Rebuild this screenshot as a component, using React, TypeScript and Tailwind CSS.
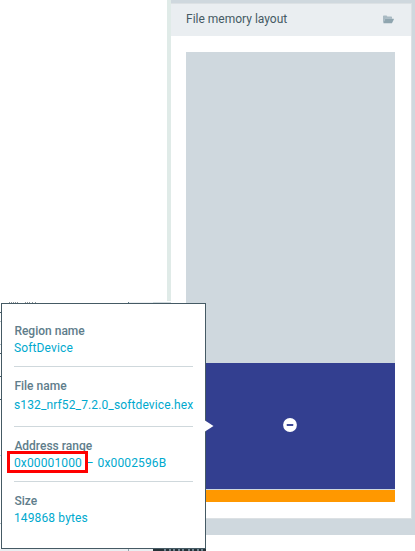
const sections = [
  { label: "Region name", value: "SoftDevice", box: "h-[43px] border-b" },
  { label: "File name", value: "s132_nrf52_7.2.0_softdevice.hex", box: "h-[60px] border-b pt-[12px]", gap: "mt-[2px]" },
  { label: "Address range", value: "0x00001000 – 0x0002596B", box: "h-[55px] border-b pt-[12px]", gap: "[word-spacing:0.7px]" },
  { label: "Size", value: "149868 bytes", box: "h-[50px] pt-[12px]" },
];

const edgeMarks = [
  { top: 312, color: "#455a64" },
  { top: 321, color: "#b0bec5" },
  { top: 344, color: "#b0bec5" },
  { top: 353, color: "#455a64" },
  { top: 376, color: "#455a64" },
  { top: 399, color: "#455a64" },
  { top: 455, color: "#a5dff0" },
  { top: 523, color: "#b0bec5" },
];

const titleMarks = [9, 11, 13, 15, 17, 25, 27, 29, 32, 35];
const logMarks = [11, 16, 20, 25, 29, 35, 39, 44, 48];

function MemoryPanel() {
  return (
    <section className="flex h-[535px] w-[244px] shrink-0 flex-col bg-[#cfd8de] pt-[3px]">
      <div className="flex h-[516px] w-[241px] flex-col border-t border-r border-b border-[#dce1e4] bg-white">
        <header className="flex h-[32px] shrink-0 items-center justify-between bg-[#eaeef1] pr-[17px] pl-[15px]">
          <h1 className="mt-[-2px] text-[12px] leading-[16px] text-[#455a64]">File memory layout</h1>
          <svg className="mt-[-2px] h-[9px] w-[11px]" viewBox="0 0 11 9" fill="none">
            <path d="M0 7.5V1.2Q0 .4.8.4H3.5L4.4 1.5H8.3Q9 1.5 9 2.3V3.7H2.7Q2.2 3.7 2 4.2L.5 7.7Z" fill="#a9bac3" />
            <path d="M2.7 3.7H10.5Q11.1 3.7 10.8 4.4L9.2 7.8Q9 8.3 8.3 8.3H.8Q.2 8.3.5 7.7L2 4.2Q2.2 3.7 2.7 3.7Z" fill="#8fa5af" />
          </svg>
        </header>
        <div className="flex grow flex-col px-[15px] pt-[16px]">
          <div className="h-[311px] w-[209px] bg-[#cfd8de]" />
          <div className="flex h-[126px] w-[209px] items-center justify-center bg-[#333f90]">
            <svg className="mt-[-2px] mr-[1px] h-[14px] w-[14px]" viewBox="0 0 14 14">
              <circle cx="7" cy="7" r="6.9" fill="white" />
              <rect x="3.7" y="6" width="6.6" height="2" rx=".4" fill="#3f4b98" />
            </svg>
          </div>
          <div className="h-[13px] w-[209px] border-t border-[#cfd8de] bg-[#ff9800]" />
        </div>
      </div>
    </section>
  );
}

function RegionTooltip() {
  return (
    <aside className="absolute top-[303px] left-[1px] h-[246px] w-[205px] border border-[#455a64] bg-white px-[12px] pt-[20px] text-[12px]">
      {sections.map((s) => (
        <div key={s.label} className={`${s.box} w-[179px] border-[#cfd8dc]`}>
          <div className="h-[17px] whitespace-nowrap pl-[0.4px] font-medium leading-[15px] text-[#607d8b]">{s.label}</div>
          <div className={`${s.gap ?? ""} h-[17px] whitespace-nowrap leading-[15px] tracking-[0.13px] text-[#00a9ce]`}>{s.value}</div>
        </div>
      ))}
      <svg className="absolute top-[116px] left-[203px] h-[12px] w-[9px]" viewBox="0 0 9 12">
        <path d="M0 .5L8.5 6L0 11.5Z" fill="white" />
      </svg>
      <div className="absolute top-[147px] left-[5px] h-[22px] w-[81px] border-[3px] border-[#ff0000]" />
    </aside>
  );
}

export default function App() {
  return (
    <main
      className="relative h-[551px] w-[415px] overflow-hidden bg-white"
      style={{ fontFamily: 'Roboto, "Liberation Sans", sans-serif' }}
    >
      <div className="flex">
        <div className="h-[300px] w-[167px] shrink-0" />
        <div className="h-[301px] w-[4px] shrink-0 bg-[#e0ebe8]" />
        <MemoryPanel />
      </div>
      {edgeMarks.map((m) => (
        <div key={m.top} className="absolute left-0 h-px w-px" style={{ top: m.top, background: m.color }} />
      ))}
      {titleMarks.map((x) => (
        <div key={x} className="absolute top-[302px] h-px w-px bg-[#8d9499]" style={{ left: x }} />
      ))}
      <div className="absolute top-[302px] left-[128px] flex h-px w-[43px]">
        <div className="w-px bg-[#607d8b]" />
        <div className="w-[24px] bg-[#eaeef1]" />
        <div className="grow bg-[#cfd8dc]" />
      </div>
      <div className="absolute top-[549px] left-0 flex h-[2px] w-[206px] overflow-hidden">
        <div className="w-[128px] bg-[#eaeef1]" />
        <div className="w-px bg-[#90a4ae]" />
        <div className="w-[24px] bg-[#eaeef1]" />
        <div className="relative grow bg-[#263238]">
          {logMarks.map((x) => (
            <div key={x} className="absolute top-0 h-[2px] w-[2px] bg-[#718692]" style={{ left: x }} />
          ))}
        </div>
      </div>
      <RegionTooltip />
    </main>
  );
}
